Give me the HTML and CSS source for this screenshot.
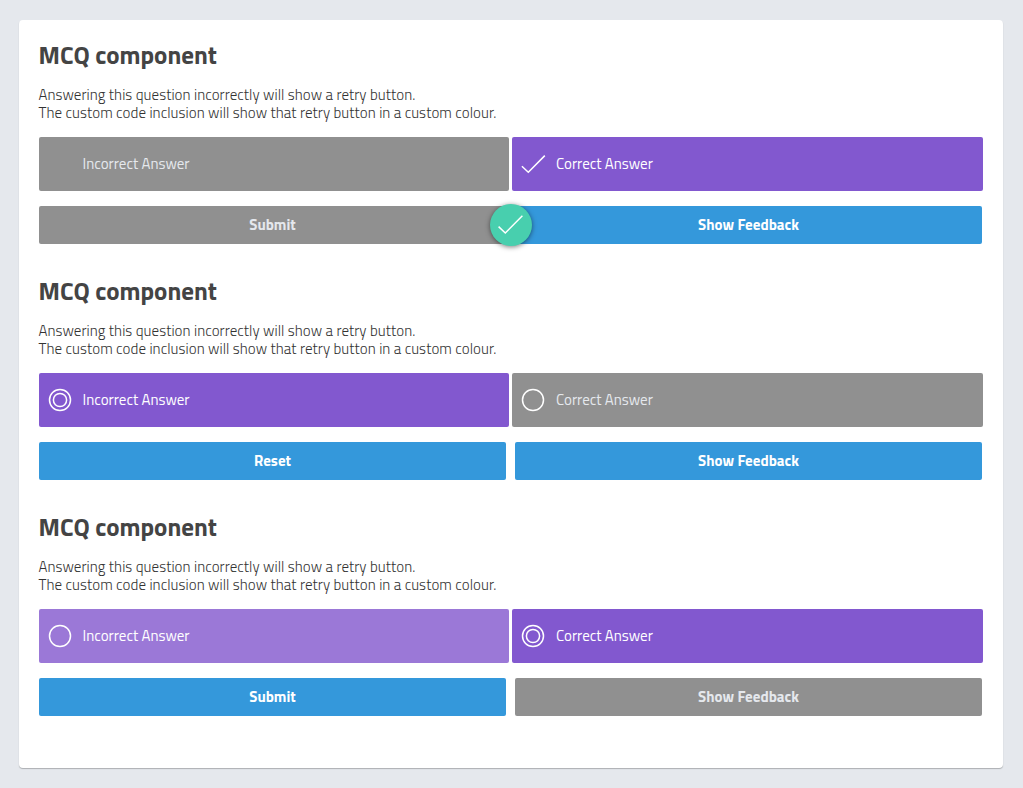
FILE: index.html
```html
<!DOCTYPE html>
<html lang="en">
<head>
    <meta charset="UTF-8">
    <meta name="viewport" content="width=device-width, initial-scale=1.0">
    <title>MCQ component</title>
    <link rel="stylesheet" href="styles.css">
</head>
<body>
    <div class="article">
        <div class="mcq">
            <h2 class="title">MCQ component</h2>
            <p class="body-text">Answering this question incorrectly will show a retry button.<br>The custom code inclusion will show that retry button in a custom colour.</p>
            <div class="items">
                <div class="item disabled">
                    <span class="icon"></span>
                    <span class="label">Incorrect Answer</span>
                </div>
                <div class="item selected">
                    <svg class="icon" viewBox="0 0 24 24"><path d="M0.9 14.2 L7.3 20.2 L23.8 3.6"/></svg>
                    <span class="label">Correct Answer</span>
                </div>
            </div>
            <div class="buttons">
                <button class="button submit" disabled>Submit</button>
                <button class="button feedback">Show Feedback</button>
                <span class="marking">
                    <svg class="icon" viewBox="0 0 24 24"><path d="M-0.4 13.6 L6.3 20 L23.4 2.8"/></svg>
                </span>
            </div>
        </div>

        <div class="mcq">
            <h2 class="title">MCQ component</h2>
            <p class="body-text">Answering this question incorrectly will show a retry button.<br>The custom code inclusion will show that retry button in a custom colour.</p>
            <div class="items">
                <div class="item selected">
                    <svg class="icon" viewBox="0 0 24 24"><circle cx="12" cy="12" r="10.5"/><circle cx="12" cy="12" r="6.6"/></svg>
                    <span class="label">Incorrect Answer</span>
                </div>
                <div class="item disabled">
                    <svg class="icon" viewBox="0 0 24 24"><circle cx="12" cy="12" r="10.5"/></svg>
                    <span class="label">Correct Answer</span>
                </div>
            </div>
            <div class="buttons">
                <button class="button reset">Reset</button>
                <button class="button feedback">Show Feedback</button>
            </div>
        </div>

        <div class="mcq">
            <h2 class="title">MCQ component</h2>
            <p class="body-text">Answering this question incorrectly will show a retry button.<br>The custom code inclusion will show that retry button in a custom colour.</p>
            <div class="items">
                <div class="item">
                    <svg class="icon" viewBox="0 0 24 24"><circle cx="12" cy="12" r="10.5"/></svg>
                    <span class="label">Incorrect Answer</span>
                </div>
                <div class="item selected">
                    <svg class="icon" viewBox="0 0 24 24"><circle cx="12" cy="12" r="10.5"/><circle cx="12" cy="12" r="6.6"/></svg>
                    <span class="label">Correct Answer</span>
                </div>
            </div>
            <div class="buttons">
                <button class="button submit">Submit</button>
                <button class="button feedback" disabled>Show Feedback</button>
            </div>
        </div>
    </div>
</body>
</html>
```

FILE: styles.css
```css
body {
    margin: 0;
    padding: 20px 20px 20px 19px;
    background-color: #e5e8ed;
    color: #444;
    font-family: "Titillium Web", Roboto, "Liberation Sans", sans-serif;
}
.article {
    box-sizing: border-box;
    height: 748px;
    padding: 20px;
    background-color: #fff;
    border-radius: 4px;
    box-shadow: 0 1px 1px rgba(0,0,0,0.25);
}
.mcq {
    height: 236px;
}
.title {
    margin: 0 0 0 -0.5px;
    font-size: 25px;
    line-height: 30px;
    font-weight: 700;
    white-space: nowrap;
}
.body-text {
    margin: 16px 0 0 -0.5px;
    color: #333;
    font-size: 15px;
    line-height: 18px;
    font-weight: 300;
    letter-spacing: 0.055px;
    white-space: nowrap;
}
.items {
    display: grid;
    grid-template-columns: 470px 471px;
    gap: 3px;
    margin-top: 15px;
}
.item {
    display: flex;
    align-items: center;
    box-sizing: border-box;
    height: 54px;
    padding-left: 9px;
    background-color: #9b78d7;
    border-radius: 2px;
    color: #fff;
    font-size: 15px;
    white-space: nowrap;
}
.item.selected {
    background-color: #8258cf;
}
.item.disabled {
    background-color: #909090;
}
.label {
    padding-bottom: 2px;
}
.item.disabled .label {
    color: #e5e8ed;
}
.icon {
    width: 24px;
    height: 24px;
    margin-right: 10.5px;
    fill: none;
    stroke: #fff;
    stroke-width: 1.5;
    overflow: visible;
}
.item + .item .icon {
    margin-right: 11px;
}
.buttons {
    position: relative;
    display: flex;
    gap: 9px;
    margin-top: 15px;
    padding-right: 1px;
}
.button {
    flex: 1;
    height: 38px;
    padding: 0 0 2px;
    border: none;
    border-radius: 2px;
    background-color: #3498db;
    color: #fff;
    font-family: inherit;
    font-size: 15px;
    font-weight: 700;
    cursor: pointer;
}
.button:disabled {
    background-color: #909090;
    color: #e5e8ed;
    cursor: default;
}
.marking {
    position: absolute;
    top: -2px;
    left: 451px;
    display: flex;
    align-items: center;
    justify-content: center;
    width: 42px;
    height: 42px;
    border-radius: 50%;
    background-color: #48cfae;
    box-shadow: 0 1px 5px rgba(0,0,0,0.5);
}
.marking .icon {
    margin: 0;
}
```
